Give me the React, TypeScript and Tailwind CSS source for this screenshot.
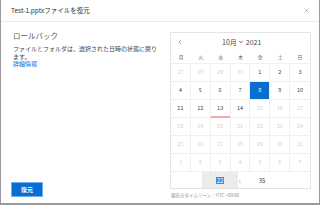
import { X, ChevronLeft, ChevronDown } from 'lucide-react';

const WEEK = ['月', '火', '水', '木', '金', '土', '日'];

type Day = { n: number; off?: boolean; sel?: boolean; today?: boolean };

function buildDays(): Day[] {
  const days: Day[] = [27, 28, 29, 30].map((n) => ({ n, off: true }));
  for (let n = 1; n <= 31; n++) {
    days.push({ n, off: n > 14, sel: n === 8, today: n === 13 });
  }
  for (let n = 1; n <= 7; n++) days.push({ n, off: true });
  return days;
}

export default function App() {
  const days = buildDays();
  return (
    <div
      className="flex h-[205px] w-[320px] flex-col border-x border-b-2 border-[#9a9a9a] bg-white text-[#444]"
      style={{ fontFamily: '"Noto Sans CJK JP", "Noto Sans", sans-serif' }}
    >
      <header className="flex h-[22px] shrink-0 items-center justify-between border-b border-[#ececec] pl-[10px] pr-[9px]">
        <span className="text-[6.5px] leading-none text-[#333]">Test-1.pptxファイルを復元</span>
        <X className="h-[7px] w-[7px] text-[#777]" strokeWidth={1.5} />
      </header>

      <div className="flex flex-1">
        <section className="flex w-[169px] flex-col pl-[12px] pr-[10px] pt-[9px]">
          <h2 className="text-[7.5px] leading-[10px] text-[#555]">ロールバック</h2>
          <p className="mt-[4px] text-[6px] leading-[7.5px] text-[#444]">
            ファイルとフォルダは、選択された日時の状態に戻ります。
          </p>
          <a className="text-[6px] leading-[7.5px] text-[#0a6ed1]">詳細情報</a>
          <div className="flex-1" />
          <button className="mb-[6px] ml-[-2px] flex h-[15px] w-[32px] items-center justify-center border border-[#6cb0f2] bg-[#0a6ed1] text-[6px] font-bold text-white">
            復元
          </button>
        </section>

        <section className="pt-[10px]">
          <div className="w-[141px] border border-[#e4e4e4]">
            <div className="flex h-[18px] items-center px-[5px]">
              <ChevronLeft className="h-[8px] w-[8px] text-[#555]" strokeWidth={1.5} />
              <div className="ml-[38px] flex items-center text-[7px] leading-none text-[#444]">
                10月
                <ChevronDown className="ml-[1px] h-[6px] w-[6px]" strokeWidth={3} />
                <span className="ml-[2px]">2021</span>
              </div>
            </div>
            <div className="grid h-[12px] grid-cols-7 items-center text-center text-[5px] text-[#666]">
              {WEEK.map((w) => (
                <span key={w}>{w}</span>
              ))}
            </div>
            <div className="grid grid-cols-7 border-t border-[#efefef]">
              {days.map((d, i) => (
                <div
                  key={i}
                  className={`relative flex h-[18px] items-center justify-center border-[#efefef] text-[5.5px] ${
                    i % 7 !== 6 ? 'border-r' : ''
                  } border-b ${
                    d.sel ? 'bg-[#0a6ed1] text-white' : d.off ? 'text-[#d2d2d2]' : 'text-[#444]'
                  }`}
                >
                  {d.n}
                  {d.today && <span className="absolute bottom-[-1px] left-0 right-0 h-[2px] bg-[#f4a8a8]" />}
                </div>
              ))}
            </div>
            <div className="flex h-[16px] items-center text-[6px] text-[#444]">
              <div className="ml-[31px] flex h-full w-[36px] items-center justify-center bg-[#ececec]">
                <span className="bg-[#3b8be8] px-[1px] leading-[7px] text-white">22</span>
              </div>
              <span className="ml-[1px]">:</span>
              <span className="ml-[18px]">35</span>
            </div>
          </div>
          <div className="mt-[1px] pl-[1px] text-[4.5px] leading-[10px] text-[#888]">
            現在のタイムゾーン：UTC +09:00
          </div>
        </section>
      </div>
    </div>
  );
}
